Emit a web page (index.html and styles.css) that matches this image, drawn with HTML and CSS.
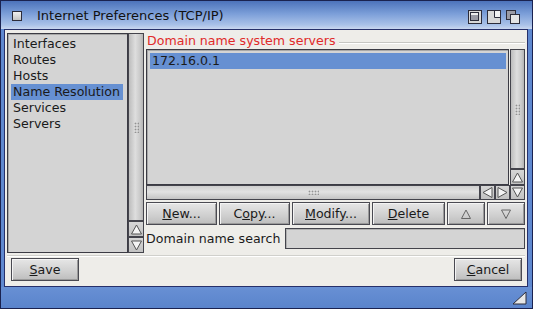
FILE: index.html
```html
<!DOCTYPE html>
<html lang="en">
<head>
  <meta charset="UTF-8">
  <title>Internet Preferences (TCP/IP)</title>
  <link rel="stylesheet" href="styles.css">
</head>
<body>
<div class="window">
  <div class="titlebar">
    <span class="close-gadget"></span>
    <span class="title">Internet Preferences (TCP/IP)</span>
    <div class="gadgets">
      <svg width="14" height="14" viewBox="0 0 14 14">
        <rect x="0.5" y="0.5" width="13" height="13" fill="#d8d8d8" stroke="#2c2c3a"/>
        <rect x="2.5" y="2.5" width="8" height="8" fill="#9a9aa4" stroke="#2c2c3a"/>
        <rect x="3" y="3" width="7" height="2" fill="#eee"/>
      </svg>
      <svg width="14" height="14" viewBox="0 0 14 14">
        <rect x="0.5" y="0.5" width="13" height="13" fill="#d8d8d8" stroke="#2c2c3a"/>
        <path d="M7.5 0.5 V7.5 H13.5" fill="none" stroke="#2c2c3a"/>
        <rect x="8" y="1" width="5" height="6" fill="#f2f2f2"/>
      </svg>
      <svg width="14" height="14" viewBox="0 0 14 14">
        <rect x="0.5" y="0.5" width="9" height="9" fill="#9a9aa4" stroke="#2c2c3a"/>
        <rect x="4.5" y="4.5" width="9" height="9" fill="#e4e4e4" stroke="#2c2c3a"/>
      </svg>
    </div>
  </div>

  <div class="content">
    <div class="main">
      <ul class="listbox side-list">
        <li>Interfaces</li>
        <li>Routes</li>
        <li>Hosts</li>
        <li class="selected">Name Resolution</li>
        <li>Services</li>
        <li>Servers</li>
      </ul>
      <div class="vscroll-col">
        <div class="knob vertical"><span class="grip"></span></div>
        <div class="arrow">
          <svg width="13" height="13" viewBox="0 0 13 13"><polygon points="1.5,11 6.5,2 11.5,11" fill="#f4f4f4" stroke="#555"/></svg>
        </div>
        <div class="arrow">
          <svg width="13" height="13" viewBox="0 0 13 13"><polygon points="1.5,2 6.5,11 11.5,2" fill="#f4f4f4" stroke="#555"/></svg>
        </div>
      </div>

      <div class="group">
        <div class="group-title"><span>Domain name system servers</span></div>
        <div class="dns-area">
          <ul class="listbox dns-list">
            <li class="selected">172.16.0.1</li>
          </ul>
          <div class="knob vertical dns-vknob"><span class="grip"></span></div>
          <div class="arrow dns-up">
            <svg width="13" height="13" viewBox="0 0 13 13"><polygon points="1.5,11 6.5,2 11.5,11" fill="#f4f4f4" stroke="#555"/></svg>
          </div>
          <div class="knob horizontal"><span class="grip hgrip"></span></div>
          <div class="arrow">
            <svg width="13" height="13" viewBox="0 0 13 13"><polygon points="11,1.5 2,6.5 11,11.5" fill="#f4f4f4" stroke="#555"/></svg>
          </div>
          <div class="arrow">
            <svg width="13" height="13" viewBox="0 0 13 13"><polygon points="2,1.5 11,6.5 2,11.5" fill="#f4f4f4" stroke="#555"/></svg>
          </div>
          <div class="arrow">
            <svg width="13" height="13" viewBox="0 0 13 13"><polygon points="1.5,2 6.5,11 11.5,2" fill="#f4f4f4" stroke="#555"/></svg>
          </div>
        </div>

        <div class="button-row">
          <button class="btn w-new"><u>N</u>ew...</button>
          <button class="btn w-copy">C<u>o</u>py...</button>
          <button class="btn w-modify"><u>M</u>odify...</button>
          <button class="btn w-delete"><u>D</u>elete</button>
          <button class="btn w-arrow">
            <svg width="12" height="12" viewBox="0 0 12 12"><polygon points="1.5,10.5 6,2 10.5,10.5" fill="none" stroke="#666"/></svg>
          </button>
          <button class="btn w-arrow">
            <svg width="12" height="12" viewBox="0 0 12 12"><polygon points="1.5,2 6,10.5 10.5,2" fill="none" stroke="#666"/></svg>
          </button>
        </div>

        <div class="search-row">
          <label for="search">Domain name search</label>
          <input type="text" id="search">
        </div>
      </div>
    </div>

    <div class="separator"></div>

    <div class="footer">
      <button class="btn footer-btn"><u>S</u>ave</button>
      <button class="btn footer-btn"><u>C</u>ancel</button>
    </div>
  </div>

  <div class="bottombar">
    <svg class="resize" width="15" height="14" viewBox="0 0 15 14">
      <polygon points="14,1 14,13 1,13" fill="#e6e6e6" stroke="#2c2c3a"/>
    </svg>
  </div>
</div>
</body>
</html>
```

FILE: styles.css
```css
body {
    margin: 0;
    padding: 0;
    font-family: "DejaVu Sans", Verdana, sans-serif;
    font-size: 12.6px;
    color: #1a1a1a;
}

.window {
    width: 533px;
    height: 309px;
    box-sizing: border-box;
    border: 1px solid #1a2250;
    background-color: #5f88cf;
    display: flex;
    flex-direction: column;
}

/* Titelleiste */
.titlebar {
    height: 28px;
    display: flex;
    align-items: center;
    background: linear-gradient(#4c72bb, #7b9ed8 45%, #a9c1e8 85%, #c9d7ef);
    position: relative;
}

.close-gadget {
    width: 8px;
    height: 8px;
    margin-left: 11px;
    margin-top: 1px;
    border: 1px solid #2c2c3a;
    background: linear-gradient(#f0f0f0, #c4c4c4);
}

.title {
    margin-left: 15px;
    margin-top: 1px;
    font-size: 13px;
    color: #111;
}

.gadgets {
    margin-left: auto;
    margin-right: 12px;
    margin-top: 3px;
    display: flex;
    gap: 5px;
}

/* Inhalt */
.content {
    height: 256px;
    margin: 0 4px 0 3px;
    border: 1px solid #26306a;
    background-color: #eeede9;
    display: flex;
    flex-direction: column;
}

.main {
    display: flex;
    height: 220px;
    margin-top: 3px;
    padding-left: 2px;
}

.listbox {
    list-style: none;
    margin: 0;
    box-sizing: border-box;
    border: 1px solid #3b3b44;
    box-shadow: inset 1px 1px 0 #a8a8a8;
    background-color: #d4d4d4;
}

.listbox li {
    height: 16px;
    line-height: 16px;
    padding-left: 2px;
    white-space: nowrap;
}

.listbox li.selected {
    background-color: #6690d2;
}

.side-list {
    width: 121px;
    height: 220px;
    padding: 2px 4px 0 3px;
}

.vscroll-col {
    width: 16px;
    display: flex;
    flex-direction: column;
}

.knob {
    box-sizing: border-box;
    border: 1px solid #44444c;
    display: flex;
    align-items: center;
    justify-content: center;
}

.knob.vertical {
    background: linear-gradient(to right, #bdbdbd, #dedede 45%, #c9c9c9 80%, #b4b4b4);
}

.knob.horizontal {
    background: linear-gradient(#cfcfcf, #e2e2e2 45%, #c4c4c4);
}

.vscroll-col .knob {
    flex: 1;
}

.grip {
    width: 5px;
    height: 11px;
    background-image: radial-gradient(circle, #8a8a8a 0.8px, transparent 1.1px);
    background-size: 3px 3px;
    opacity: 0.9;
}

.hgrip {
    width: 11px;
    height: 5px;
}

.arrow {
    box-sizing: border-box;
    height: 15px;
    border: 1px solid #44444c;
    background: linear-gradient(#d6d6d6, #c2c2c2);
    display: flex;
    align-items: center;
    justify-content: center;
}

.vscroll-col .arrow {
    height: 16px;
}

/* rechte Gruppe */
.group {
    width: 379px;
    margin-left: 2px;
    display: flex;
    flex-direction: column;
}

.group-title {
    height: 16px;
    display: flex;
    align-items: center;
}

.group-title span {
    color: #e02a2a;
    padding-left: 1px;
    line-height: 14px;
}

.group-title::after {
    content: "";
    flex: 1;
    height: 1px;
    margin-left: 3px;
    margin-top: 3px;
    background-color: #c6c6c2;
    box-shadow: 0 1px 0 #ffffff;
}

.dns-area {
    display: grid;
    grid-template-columns: 1fr 15px 15px 15px;
    grid-template-rows: 120px 16px 15px;
}

.dns-list {
    grid-column: 1 / 4;
    grid-row: 1 / 3;
    margin-right: 1px;
    padding: 3px 2px 0 3px;
}

.dns-vknob {
    grid-column: 4;
    grid-row: 1;
}

.dns-up {
    grid-column: 4;
    grid-row: 2;
    height: 16px;
}

.button-row {
    display: flex;
    gap: 2px;
    margin-top: 2px;
}

.btn {
    height: 23px;
    padding: 0;
    box-sizing: border-box;
    border: 1px solid #4a4a52;
    box-shadow: inset 1px 1px 0 #f4f4f4, inset -1px -1px 0 #9a9a9a;
    background: linear-gradient(#e6e6e6, #cfcfcf 60%, #bdbdbd);
    font-family: "DejaVu Sans", Verdana, sans-serif;
    font-size: 12.6px;
    color: #1a1a1a;
    display: flex;
    align-items: center;
    justify-content: center;
}

.w-new { width: 71px; }
.w-copy { width: 71px; }
.w-modify { width: 78px; }
.w-delete { width: 73px; }
.w-arrow { width: 38px; }

.search-row {
    display: flex;
    align-items: center;
    margin-top: 3px;
    height: 21px;
}

.search-row label {
    width: 139px;
}

.search-row input {
    flex: 1;
    height: 21px;
    box-sizing: border-box;
    border: 1px solid #44444c;
    box-shadow: inset 1px 1px 0 #b0b0b0;
    background-color: #d4d4d4;
    margin: 0;
}

.separator {
    height: 1px;
    margin: 2px 2px 0 2px;
    background-color: #d0d0cc;
    box-shadow: 0 1px 0 #ffffff;
}

.footer {
    display: flex;
    justify-content: space-between;
    padding: 0 5px 0 6px;
    margin-top: 2px;
}

.footer-btn {
    width: 68px;
}

/* untere Leiste */
.bottombar {
    flex: 1;
    background: linear-gradient(#6890d4, #5a84cc);
    display: flex;
    justify-content: flex-end;
    align-items: center;
}

.resize {
    margin-right: 5px;
    margin-top: 1px;
}
```
